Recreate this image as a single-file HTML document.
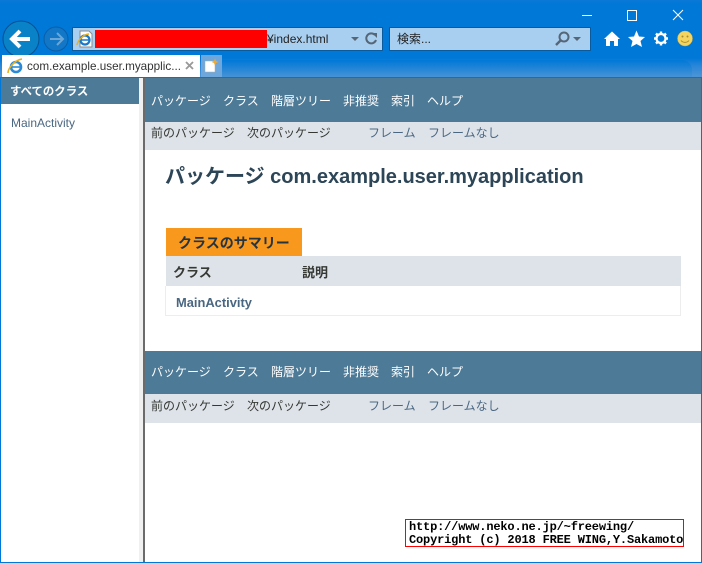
<!DOCTYPE html>
<html><head><meta charset="utf-8">
<style>
html,body{margin:0;padding:0;width:702px;height:563px;overflow:hidden;background:#fff}
body{position:relative;font-family:"Liberation Sans","Noto Sans CJK JP",sans-serif}
.a{position:absolute;white-space:nowrap}
.n{font-size:12px;line-height:18px;color:#fff}
.s{font-size:12px;line-height:18px;color:#353833}
.l{font-size:12px;line-height:18px;color:#4a6782}
</style></head><body>
<!-- chrome -->
<div class="a" style="left:0;top:0;width:702px;height:78px;background:linear-gradient(#0a78d6,#0078d7 4px,#0078d7 58px,#2a86d8 66px,#4a94d6 76px)"></div>
<div class="a" style="left:222px;top:60px;width:470px;height:18px;background:linear-gradient(#0078d7,#4a94d6);border-radius:0 10px 0 0"></div>
<div class="a" style="left:0;top:77px;width:702px;height:1px;background:#1f6cb0"></div>
<!-- window buttons -->
<div class="a" style="left:582px;top:15px;width:10px;height:1px;background:#fff"></div>
<div class="a" style="left:627px;top:10px;width:8px;height:9px;border:1px solid #fff"></div>
<svg class="a" style="left:672px;top:9px" width="12" height="12"><path d="M1 1L11 11M11 1L1 11" stroke="#fff" stroke-width="1" fill="none"/></svg>
<!-- back / forward -->
<svg class="a" style="left:0;top:18px" width="72" height="40">
<circle cx="21" cy="21" r="18" fill="#0a82c8" stroke="#07508f" stroke-width="1"/>
<path d="M12 21H30M20 13L12 21L20 29" stroke="#fff" stroke-width="4" fill="none"/>
<circle cx="56" cy="21" r="12" fill="#1177c6" stroke="#0a5ea8" stroke-width="1"/>
<path d="M50 21H62M57 15L63 21L57 27" stroke="#6aa6d8" stroke-width="2" fill="none"/>
</svg>
<!-- address bar -->
<div class="a" style="left:72px;top:27px;width:309px;height:22px;background:#a9cff0;border:1px solid #0a5a9c"></div>
<svg class="a" style="left:75px;top:30px" width="20" height="20">
<path d="M5 1H14L17 4V17H5Z" fill="#fff" stroke="#8a8a8a"/>
<circle cx="10" cy="10" r="4.5" fill="none" stroke="#1a78c8" stroke-width="2.2"/>
<path d="M6 10H14" stroke="#1a78c8" stroke-width="1.5"/>
<path d="M2 15C3 10 9 4 14 4" stroke="#e8b020" stroke-width="1.5" fill="none"/>
</svg>
<div class="a" style="left:95px;top:30px;width:172px;height:18px;background:#f00"></div>
<div class="a" style="left:267px;top:31px;font-size:12px;line-height:16px;color:#222">¥index.html</div>
<svg class="a" style="left:348px;top:30px" width="32" height="18">
<path d="M3 7H11L7 11Z" fill="#567"/>
<path d="M27 5A5 5 0 1 0 28 10" stroke="#567" stroke-width="2" fill="none"/>
<path d="M24 3H29V8Z" fill="#567"/>
</svg>
<!-- search box -->
<div class="a" style="left:389px;top:27px;width:200px;height:22px;background:#a9cff0;border:1px solid #0a5a9c"></div>
<div class="a" style="left:397px;top:31px;font-size:12px;line-height:16px;color:#222">検索...</div>
<svg class="a" style="left:553px;top:30px" width="32" height="18">
<circle cx="11" cy="7" r="4.5" fill="none" stroke="#567" stroke-width="2"/>
<path d="M8 10L3 15" stroke="#567" stroke-width="2.4"/>
<path d="M20 7H28L24 11Z" fill="#567"/>
</svg>
<!-- toolbar icons -->
<svg class="a" style="left:603px;top:30px" width="92" height="18">
<path d="M1 9L9 1.5L17 9H15V16H11V11H7V16H3V9Z" fill="#fff"/>
<path d="M33.500 0.500L36 6.500L42 7L37.500 11L39 17L33.500 14L28 17L29.500 11L25 7L31 6.500Z" fill="#fff"/>
<path d="M58 1.500V15.500M51 8.500H65M53 3.500L63 13.500M63 3.500L53 13.500" stroke="#fff" stroke-width="2.400"/>
<circle cx="58" cy="8.500" r="4.500" fill="#0078d7" stroke="#fff" stroke-width="2.200"/>
<circle cx="82" cy="8.500" r="7.500" fill="#f4d560" stroke="#d8b040" stroke-width="0.500"/>
<circle cx="79.500" cy="6.500" r="1" fill="#a88a30"/><circle cx="84.500" cy="6.500" r="1" fill="#a88a30"/>
<path d="M78 10.500C80 13 84 13 86 10.500" stroke="#a88a30" fill="none"/>
</svg>
<!-- tabs -->
<div class="a" style="left:2px;top:55px;width:198px;height:22px;background:#fff"></div>
<svg class="a" style="left:7px;top:57px" width="18" height="18">
<circle cx="9" cy="10" r="5" fill="none" stroke="#2a8ad8" stroke-width="2.600"/>
<path d="M5 10H14" stroke="#2a8ad8" stroke-width="1.600"/>
<path d="M1 16C1 11 8 3 15 2" stroke="#e8b020" stroke-width="1.600" fill="none"/>
</svg>
<div class="a" style="left:27px;top:59px;font-size:11.7px;line-height:16px;color:#333">com.example.user.myapplic...</div>
<svg class="a" style="left:185px;top:61px" width="9" height="9"><path d="M1 1L8 8M8 1L1 8" stroke="#999" stroke-width="1.800"/></svg>
<div class="a" style="left:201px;top:55px;width:21px;height:22px;background:#6ea7dc"></div>
<svg class="a" style="left:204px;top:58px" width="16" height="16">
<path d="M1 3H11V14H1Z" fill="#fff" stroke="#aaa" stroke-width="0.500"/>
<path d="M11 0.500L12 3L14.500 4L12 5L11 7.500L10 5L7.500 4L10 3Z" fill="#f0a830"/>
</svg>
<!-- window border -->
<div class="a" style="left:0;top:78px;width:1px;height:485px;background:#0078d7"></div>
<div class="a" style="left:701px;top:78px;width:1px;height:485px;background:#0078d7"></div>
<div class="a" style="left:0;top:562px;width:702px;height:1px;background:#0078d7"></div>
<!-- left frame -->
<div class="a" style="left:1px;top:78px;width:138px;height:26px;background:#4d7a97"></div>
<div class="a" style="left:10px;top:85px;font-size:11.4px;font-weight:bold;line-height:14px;color:#fff">すべてのクラス</div>
<div class="a" style="left:11px;top:115px;font-size:12px;line-height:16px;color:#4a6782">MainActivity</div>
<!-- divider -->
<div class="a" style="left:139px;top:78px;width:4px;height:484px;background:#f0f0f0"></div>
<div class="a" style="left:143px;top:78px;width:2px;height:484px;background:#6b6b6b"></div>
<!-- top nav -->
<div class="a" style="left:145px;top:78px;width:556px;height:44px;background:#4d7a97"></div>
<div class="a n" style="left:151px;top:92px">パッケージ</div>
<div class="a n" style="left:223px;top:92px">クラス</div>
<div class="a n" style="left:271px;top:92px">階層ツリー</div>
<div class="a n" style="left:343px;top:92px">非推奨</div>
<div class="a n" style="left:391px;top:92px">索引</div>
<div class="a n" style="left:427px;top:92px">ヘルプ</div>
<div class="a" style="left:145px;top:122px;width:556px;height:28px;background:#dee3e9"></div>
<div class="a s" style="left:151px;top:124px">前のパッケージ</div>
<div class="a s" style="left:247px;top:124px">次のパッケージ</div>
<div class="a l" style="left:368px;top:124px">フレーム</div>
<div class="a l" style="left:428px;top:124px">フレームなし</div>
<!-- title -->
<div class="a" style="left:165px;top:163px;font-size:20px;font-weight:bold;line-height:28px;color:#2c4557">パッケージ com.example.user.myapplication</div>
<!-- summary -->
<div class="a" style="left:166px;top:228px;width:136px;height:28px;background:#f8981d"></div>
<div class="a" style="left:178px;top:234px;font-size:14px;font-weight:bold;line-height:18px;color:#253441">クラスのサマリー</div>
<div class="a" style="left:165px;top:286px;width:514px;height:29px;border:1px solid #ededed;border-top:0"></div>
<div class="a" style="left:166px;top:256px;width:515px;height:30px;background:#dee3e9"></div>
<div class="a" style="left:173px;top:265px;font-size:13px;font-weight:bold;line-height:16px;color:#353833">クラス</div>
<div class="a" style="left:302px;top:265px;font-size:13px;font-weight:bold;line-height:16px;color:#353833">説明</div>
<div class="a" style="left:176px;top:295px;font-size:12.9px;font-weight:bold;line-height:16px;color:#4a6782">MainActivity</div>
<!-- bottom nav -->
<div class="a" style="left:145px;top:351px;width:556px;height:43px;background:#4d7a97"></div>
<div class="a n" style="left:151px;top:363px">パッケージ</div>
<div class="a n" style="left:223px;top:363px">クラス</div>
<div class="a n" style="left:271px;top:363px">階層ツリー</div>
<div class="a n" style="left:343px;top:363px">非推奨</div>
<div class="a n" style="left:391px;top:363px">索引</div>
<div class="a n" style="left:427px;top:363px">ヘルプ</div>
<div class="a" style="left:145px;top:394px;width:556px;height:29px;background:#dee3e9"></div>
<div class="a s" style="left:151px;top:397px">前のパッケージ</div>
<div class="a s" style="left:247px;top:397px">次のパッケージ</div>
<div class="a l" style="left:368px;top:397px">フレーム</div>
<div class="a l" style="left:428px;top:397px">フレームなし</div>
<!-- watermark -->
<div class="a" style="left:405px;top:519px;width:277px;height:26px;border:1px solid #f00;background:#fff"></div>
<div class="a" style="left:409px;top:521px;font-family:'Liberation Mono',monospace;font-weight:bold;font-size:12px;line-height:13px;letter-spacing:-.17px;color:#000">http://www.neko.ne.jp/~freewing/<br>Copyright (c) 2018 FREE WING,Y.Sakamoto</div>
</body></html>
